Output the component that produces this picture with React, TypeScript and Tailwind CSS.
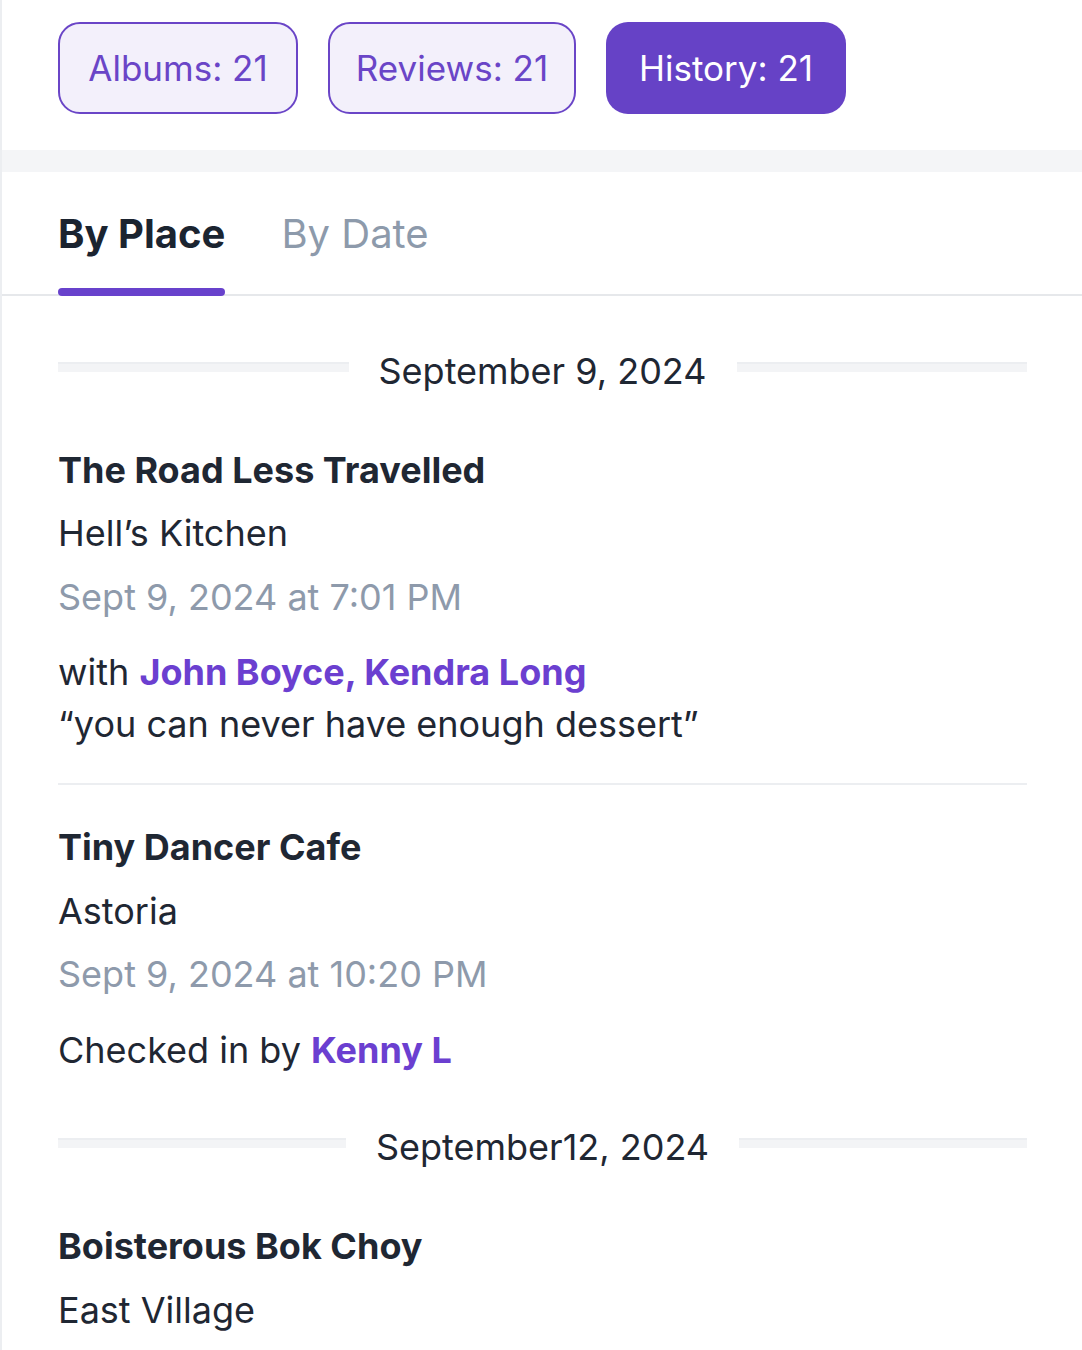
export default function App() {
  const font = { fontFamily: 'Inter, Lato, sans-serif' }

  const DateDivider = ({ label }: { label: string }) => (
    <div className="flex items-center gap-[30px]">
      <div className="mb-[8px] h-[10px] flex-1 bg-[#f3f4f6] border-t-2 border-[#eceef1]" />
      <span className="text-[36px] leading-none text-[#1f2733]">{label}</span>
      <div className="mb-[8px] h-[10px] flex-1 bg-[#f3f4f6] border-t-2 border-[#eceef1]" />
    </div>
  )

  return (
    <div className="min-h-[1350px] bg-white border-l-2 border-[#eceef1]" style={font}>
      {/* counters */}
      <div className="flex gap-[30px] px-[56px] pt-[22px] pb-[36px]">
        <button className="h-[92px] w-[240px] rounded-[22px] border-2 border-[#6a45c7] bg-[#f3f0fb] text-[35px] text-[#6a45c7]">
          Albums: 21
        </button>
        <button className="h-[92px] w-[248px] rounded-[22px] border-2 border-[#6a45c7] bg-[#f3f0fb] text-[35px] text-[#6a45c7]">
          Reviews: 21
        </button>
        <button className="h-[92px] w-[240px] rounded-[22px] bg-[#6642c6] text-[35px] text-white">
          History: 21
        </button>
      </div>
      <div className="h-[22px] bg-[#f4f5f7]" />

      {/* tabs */}
      <div className="flex gap-[56px] px-[56px] pt-[42px] border-b-2 border-[#e6e8eb]">
        <div className="flex flex-col">
          <span className="text-[40px] font-bold leading-none text-[#1b2430]">By Place</span>
          <div className="mt-[34px] h-[8px] rounded-full bg-[#6842cc] -mb-[2px]" />
        </div>
        <span className="text-[40px] leading-none text-[#8d9aab]">By Date</span>
      </div>

      <div className="px-[56px] pr-[55px] pt-[57px]">
        <DateDivider label="September 9, 2024" />

        <div className="pt-[63px] pb-[33px] border-b-2 border-[#eceef1]">
          <div className="text-[36px] font-bold leading-none text-[#1f2733]">The Road Less Travelled</div>
          <div className="mt-[27px] text-[36px] leading-none text-[#1f2733]">Hell’s Kitchen</div>
          <div className="mt-[28px] text-[36px] leading-none text-[#8e9aab]">Sept 9, 2024 at 7:01 PM</div>
          <div className="mt-[31px] text-[36px] leading-[52px] text-[#1f2733]">
            with <span className="font-bold text-[#6b3fd0]">John Boyce, Kendra Long</span>
          </div>
          <div className="text-[36px] leading-[52px] text-[#1f2733]">“you can never have enough dessert”</div>
        </div>

        <div className="pt-[44px] pb-[61px]">
          <div className="text-[36px] font-bold leading-none text-[#1f2733]">Tiny Dancer Cafe</div>
          <div className="mt-[28px] text-[36px] leading-none text-[#1f2733]">Astoria</div>
          <div className="mt-[27px] text-[36px] leading-none text-[#8e9aab]">Sept 9, 2024 at 10:20 PM</div>
          <div className="mt-[40px] text-[36px] leading-none text-[#1f2733]">
            Checked in by <span className="font-bold text-[#6b3fd0]">Kenny L</span>
          </div>
        </div>

        <DateDivider label="September12, 2024" />

        <div className="pt-[63px]">
          <div className="text-[36px] font-bold leading-none text-[#1f2733]">Boisterous Bok Choy</div>
          <div className="mt-[28px] text-[36px] leading-none text-[#1f2733]">East Village</div>
        </div>
      </div>
    </div>
  )
}
